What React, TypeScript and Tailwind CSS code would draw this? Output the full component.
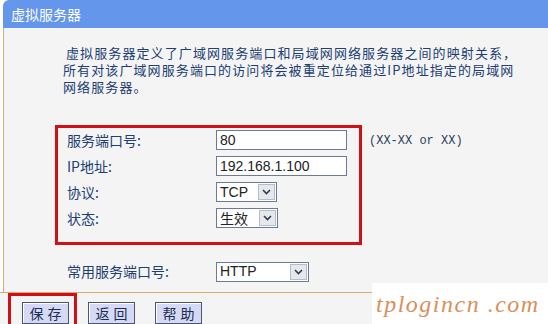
import React from "react";

const cjk = "font-['Noto_Sans_CJK_SC','Noto_Sans',sans-serif]";

const Chevron = () => (
  <svg width="9" height="6" viewBox="0 0 9 6" fill="none">
    <path d="M1 1l3.5 3.5L8 1" stroke="#2b3b5e" strokeWidth="1.6" />
  </svg>
);

const Select: React.FC<{ value: string; width: string; cjkText?: boolean }> = ({
  value,
  width,
  cjkText,
}) => (
  <div
    className={`${width} h-[20px] flex items-stretch border border-[#6b7a97] bg-white`}
  >
    <div
      className={`flex-1 flex items-center pl-[3px] text-[14px] text-[#222] ${
        cjkText ? cjk : "font-['Liberation_Sans',sans-serif]"
      }`}
    >
      {value}
    </div>
    <div className="w-[17px] m-[1px] flex items-center justify-center bg-[#e6e8ec] border border-[#b4bccb]">
      <Chevron />
    </div>
  </div>
);

const TextInput: React.FC<{ value: string }> = ({ value }) => (
  <div className="w-[131px] h-[20px] flex items-center pl-[3px] border border-[#6b7a97] bg-white text-[14px] text-[#222] font-['Liberation_Sans',sans-serif]">
    {value}
  </div>
);

const Row: React.FC<{ label: string; children: React.ReactNode }> = ({
  label,
  children,
}) => (
  <div className="flex items-center h-[20px]">
    <div className="w-[149px] text-[14px] text-[#213d72]">{label}</div>
    {children}
  </div>
);

const Btn: React.FC<{ label: string }> = ({ label }) => (
  <div className="w-[47px] h-[22px] flex items-center justify-center border border-[#4b5470] bg-[#d5d9f3] shadow-[inset_1px_1px_0_#ffffff] text-[14px] tracking-[4px] pl-[4px] text-[#1c2c55]">
    {label}
  </div>
);

export default function App() {
  return (
    <div
      className={`relative w-[548px] h-[324px] overflow-hidden bg-white ${cjk}`}
    >
      <div className="ml-[3px] h-[28px] bg-[#6496ec] rounded-tl-[6px] flex items-center pl-[8px] text-[14px] text-white">
        虚拟服务器
      </div>

      <div className="ml-[3px] h-[264px] border-l border-[#d8ad74] bg-[#f4f4f4] flex flex-col">
        <p className="mt-[16px] pl-[59px] text-[13px] tracking-[1.1px] leading-[17px] text-[#213d72]">
          <span className="pl-[3px]">
            虚拟服务器定义了广域网服务端口和局域网网络服务器之间的映射关系，
          </span>
          <br />
          所有对该广域网服务端口的访问将会被重定位给通过IP地址指定的局域网
          <br />
          网络服务器。
        </p>

        <div className="mt-[30px] ml-[51px] flex items-start">
          <div className="w-[307px] h-[120px] border-[3px] border-[#d10f14] pl-[9px] pt-[2px] flex flex-col gap-[6px]">
            <Row label="服务端口号:">
              <TextInput value="80" />
            </Row>
            <Row label="IP地址:">
              <TextInput value="192.168.1.100" />
            </Row>
            <Row label="协议:">
              <Select value="TCP" width="w-[61px]" />
            </Row>
            <Row label="状态:">
              <Select value="生效" width="w-[62px]" cjkText />
            </Row>
          </div>
          <div className="ml-[7px] mt-[9px] leading-[14px] text-[12px] text-[#2c3c5e] font-['Liberation_Mono',monospace]">
            (XX-XX or XX)
          </div>
        </div>

        <div className="mt-[16px] pl-[63px] flex items-center">
          <div className="w-[149px] text-[14px] text-[#213d72]">常用服务端口号:</div>
          <Select value="HTTP" width="w-[93px]" />
        </div>
      </div>

      <div className="w-[372px] h-px bg-[#d8ad74]" />

      <div className="flex items-start bg-[#f4f4f4] h-[40px]">
        <div className="ml-[8px] w-[69px] h-[40px] border-[3px] border-[#d10f14] pl-[11px] pt-[6px]">
          <Btn label="保存" />
        </div>
        <div className="ml-[11px] mt-[9px]">
          <Btn label="返回" />
        </div>
        <div className="ml-[20px] mt-[9px]">
          <Btn label="帮助" />
        </div>
      </div>

      <div className="absolute left-[372px] top-[283px] right-0 bottom-0 bg-white flex items-center pl-[4px]">
        <span className="italic text-[24px] tracking-[1.5px] text-[#dc8e5c] font-['Liberation_Serif',serif]">
          tplogincn .com
        </span>
      </div>
    </div>
  );
}
